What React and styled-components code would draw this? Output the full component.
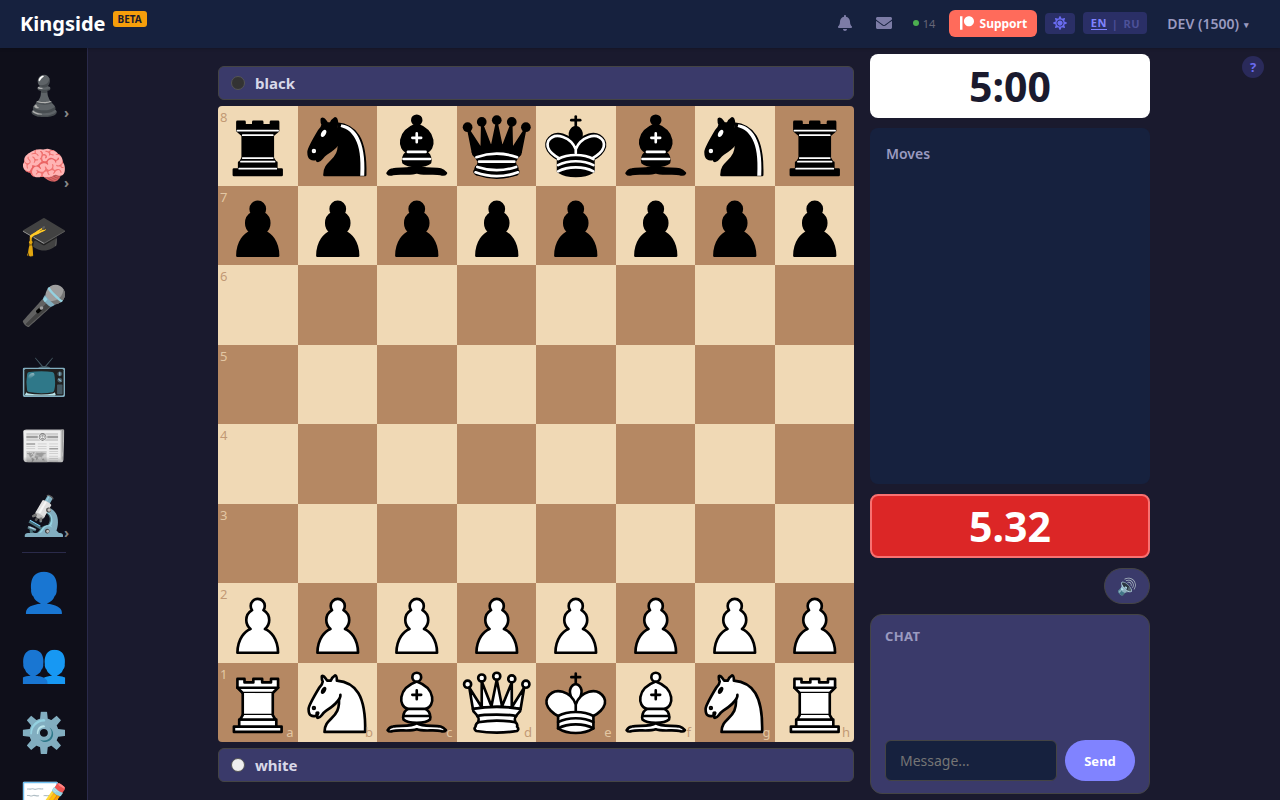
import React from "react";
import styled, { createGlobalStyle } from "styled-components";
import { FaBell, FaEnvelope, FaPatreon, FaSun } from "react-icons/fa";

const Global = createGlobalStyle`
  html, body { margin: 0; padding: 0; height: 100%; background: #1a1a2e; overflow: hidden; }
  body { font-family: "Noto Sans", "Noto Color Emoji", sans-serif; }
  * { box-sizing: border-box; }
`;

const Page = styled.div`
  width: 1280px;
  height: 800px;
  display: flex;
  flex-direction: column;
  position: relative;
  overflow: hidden;
`;

const Header = styled.header`
  height: 48px;
  flex: none;
  display: flex;
  align-items: center;
  padding: 0 31px 0 20px;
  background: #16213e;
  box-shadow: 0 1px 3px rgba(0, 0, 0, 0.2);
  z-index: 1;
`;

const Logo = styled.div`
  font-size: 20px;
  font-weight: 700;
  color: #fff;
  line-height: 1;
`;

const Beta = styled.span`
  margin: 0 0 10px 7px;
  padding: 0 5px;
  height: 16px;
  display: flex;
  align-items: center;
  background: #f59e0b;
  color: #1a1a2e;
  font-size: 10px;
  font-weight: 700;
  border-radius: 3px;
`;

const Tools = styled.div`
  margin: 0 0 2px auto;
  display: flex;
  align-items: center;
`;

const IconButton = styled.span`
  display: flex;
  color: #7c7ca6;
  font-size: 16px;
  margin-right: ${(p) => p.$gap}px;
`;

const Online = styled.span`
  display: flex;
  align-items: center;
  gap: 4px;
  margin-right: 14px;
  font-size: 11px;
  color: #667;
`;

const OnlineDot = styled.i`
  width: 6px;
  height: 6px;
  border-radius: 50%;
  background: #4caf50;
`;

const Support = styled.a`
  width: 88px;
  height: 27px;
  margin-right: 8px;
  display: flex;
  align-items: center;
  justify-content: center;
  gap: 6px;
  background: #ff6b5b;
  color: #fff;
  font-size: 12px;
  font-weight: 700;
  border-radius: 6px;
`;

const Theme = styled.span`
  width: 30px;
  height: 21px;
  margin-right: 8px;
  display: flex;
  align-items: center;
  justify-content: center;
  background: #2a2f66;
  color: #6a6cf0;
  font-size: 14px;
  border-radius: 4px;
`;

const Lang = styled.div`
  width: 64px;
  height: 22px;
  margin-right: 20px;
  display: flex;
  align-items: center;
  justify-content: center;
  gap: 5px;
  background: #2a2f66;
  border-radius: 4px;
  font-size: 11px;
  font-weight: 700;
  letter-spacing: 0.5px;
  color: #4d5199;
`;

const LangActive = styled.span`
  color: #8083ff;
  border-bottom: 1px solid #8083ff;
  line-height: 13px;
`;

const User = styled.div`
  font-size: 14px;
  font-weight: 600;
  color: #9a9ac0;
  display: flex;
  align-items: center;
  gap: 5px;
`;

const Caret = styled.span`
  font-size: 9px;
  padding-top: 2px;
`;

const Body = styled.div`
  flex: 1;
  min-height: 0;
  display: flex;
`;

const Sidebar = styled.nav`
  width: 88px;
  flex: none;
  padding-top: 13px;
  background: #0f0f1a;
  border-right: 1px solid #2a2a4a;
  display: flex;
  flex-direction: column;
  align-items: center;
  overflow: hidden;
`;

const NavItem = styled.div`
  height: 70px;
  width: 100%;
  flex: none;
  position: relative;
  display: flex;
  align-items: center;
  justify-content: center;
  padding: 0 0 4px 2px;
  font-size: 38.4px;
  line-height: 1;
`;

const Chevron = styled.span`
  position: absolute;
  left: 64px;
  top: 45px;
  font-size: 14px;
  font-weight: 700;
  color: #888;
`;

const NavDivider = styled.div`
  width: 44px;
  height: 1px;
  flex: none;
  margin: 1px 0 5px;
  background: #2a2a4a;
`;

const Main = styled.main`
  flex: 1;
  display: flex;
  justify-content: center;
  align-items: center;
  gap: 16px;
`;

const BoardColumn = styled.section`
  width: 636px;
  display: flex;
  flex-direction: column;
  gap: 6px;
`;

const PlayerBar = styled.div`
  height: 34px;
  padding: 0 12px;
  display: flex;
  align-items: center;
  gap: 10px;
  background: #3a3a6a;
  border: 1px solid #444;
  border-radius: 6px;
  font-size: 15px;
  font-weight: 700;
  color: #d8d8e8;
`;

const PlayerDot = styled.i`
  width: 14px;
  height: 14px;
  border-radius: 50%;
  background: ${(p) => (p.$white ? "#eeeeee" : "#333333")};
  border: 1px solid #555;
`;

const Board = styled.div`
  width: 636px;
  height: 636px;
  display: grid;
  grid-template-columns: repeat(8, 1fr);
  grid-template-rows: repeat(8, 1fr);
  border-radius: 4px;
  overflow: hidden;
`;

const Square = styled.div`
  position: relative;
  background: ${(p) => (p.$dark ? "#b58863" : "#f0d9b5")};
  color: ${(p) => (p.$dark ? "rgba(240, 217, 181, 0.8)" : "rgba(181, 136, 99, 0.8)")};
  font-size: 13px;
  line-height: 1;
`;

const Rank = styled.span`
  position: absolute;
  left: 2px;
  top: 5px;
`;

const File = styled.span`
  position: absolute;
  right: 4px;
  bottom: 3px;
`;

const PieceSvg = styled.svg`
  display: block;
  width: 100%;
  height: 100%;
`;

const SideColumn = styled.aside`
  width: 280px;
  display: flex;
  flex-direction: column;
`;

const Clock = styled.div`
  height: 64px;
  margin-bottom: 10px;
  padding-bottom: 1px;
  display: flex;
  align-items: center;
  justify-content: center;
  background: #fff;
  color: #1a1a2e;
  border-radius: 8px;
  font-size: 41px;
  font-weight: 700;
`;

const Moves = styled.div`
  height: 356px;
  margin-bottom: 10px;
  padding: 16px;
  background: #16213e;
  border-radius: 8px;
  font-size: 14px;
  font-weight: 600;
  line-height: 19px;
  color: #9a9ac0;
`;

const Score = styled.div`
  height: 64px;
  margin-bottom: 10px;
  padding-bottom: 1px;
  display: flex;
  align-items: center;
  justify-content: center;
  background: #dc2626;
  border: 2px solid #f87171;
  border-radius: 8px;
  color: #fff;
  font-size: 41px;
  font-weight: 700;
`;

const SoundRow = styled.div`
  height: 36px;
  margin-bottom: 10px;
  display: flex;
  justify-content: flex-end;
`;

const SoundButton = styled.button`
  width: 46px;
  height: 36px;
  padding: 0;
  background: #3a3a6a;
  border: 1px solid #444;
  border-radius: 18px;
  font-family: inherit;
  font-size: 16px;
  color: #fff;
`;

const Chat = styled.div`
  height: 180px;
  padding: 13px 14px 12px;
  display: flex;
  flex-direction: column;
  justify-content: space-between;
  background: #3a3a6a;
  border: 1px solid #444;
  border-radius: 12px;
`;

const ChatTitle = styled.div`
  font-size: 13px;
  font-weight: 700;
  letter-spacing: 0.4px;
  line-height: 16px;
  color: #9a9ac0;
`;

const ChatForm = styled.div`
  display: flex;
  gap: 8px;
`;

const ChatInput = styled.input`
  width: 172px;
  height: 41px;
  padding: 0 14px;
  background: #16213e;
  border: 1px solid #444;
  border-radius: 6px;
  font-family: inherit;
  font-size: 14px;
  color: #fff;
  outline: none;
  &::placeholder { color: #757575; }
`;

const SendButton = styled.button`
  width: 70px;
  height: 41px;
  padding: 0;
  background: #8083ff;
  border: none;
  border-radius: 21px;
  font-family: inherit;
  font-size: 13px;
  font-weight: 700;
  color: #fff;
`;

const Help = styled.span`
  position: absolute;
  left: 1242px;
  top: 56px;
  width: 22px;
  height: 22px;
  display: flex;
  align-items: center;
  justify-content: center;
  background: #2a2a5a;
  color: #6a6cf0;
  border-radius: 50%;
  font-size: 13px;
  font-weight: 700;
`;

const G = styled.g`
  fill-rule: evenodd;
  stroke: #000;
  stroke-width: 1.5;
  stroke-linecap: round;
  stroke-linejoin: round;
`;

const pawn = "M22.5 9c-2.21 0-4 1.79-4 4 0 .89.29 1.71.78 2.38C17.33 16.5 16 18.59 16 21c0 2.03.94 3.84 2.41 5.03-3 1.06-7.41 5.55-7.41 13.47h23c0-7.92-4.41-12.41-7.41-13.47 1.47-1.19 2.41-3 2.41-5.03 0-2.41-1.33-4.5-3.28-5.62.49-.67.78-1.49.78-2.38 0-2.21-1.79-4-4-4z";
const knightBack = "M22 10c10.5 1 16.5 8 16 29H15c0-9 10-6.5 8-21";
const knightHead = "M24 18c.38 2.91-5.55 7.37-8 9-3 2-2.82 4.34-5 4-1.042-.94 1.41-3.04 0-3-1 0 .19 1.23-1 2-1 0-4.003 1-4-4 0-2 6-12 6-12s1.89-1.9 2-3.5c-.73-.994-.5-2-.5-3 1-1 3 2.5 3 2.5h2s.78-1.992 2.5-3c1 0 1 3 1 3";
const knightEyes = "M9.5 25.5a.5.5 0 1 1-1 0 .5.5 0 1 1 1 0zm5.433-9.75a.5 1.5 30 1 1-.866-.5.5 1.5 30 1 1 .866.5z";
const bishopBase = "M9 36c3.39-.97 10.11.43 13.5-2 3.39 2.43 10.11 1.03 13.5 2 0 0 1.65.54 3 2-.68.97-1.65.99-3 .5-3.39-.97-10.11.46-13.5-1-3.39 1.46-10.11.03-13.5 1-1.354.49-2.323.47-3-.5 1.354-1.94 3-2 3-2z";
const bishopBody = "M15 32c2.5 2.5 12.5 2.5 15 0 .5-1.5 0-2 0-2 0-2.5-2.5-4-2.5-4 5.5-1.5 6-11.5-5-15.5-11 4-10.5 14-5 15.5 0 0-2.5 1.5-2.5 4 0 0-.5.5 0 2z";
const bishopTop = "M25 8a2.5 2.5 0 1 1-5 0 2.5 2.5 0 1 1 5 0z";
const bishopMarks = "M17.5 26h10M15 30h15m-7.5-14.5v5M20 18h5";
const queenSkirt = "M9 26c0 2 1.5 2 2.5 4 1 1.5 1 1 .5 3.5-1.5 1-1.5 2.5-1.5 2.5-1.5 1.5.5 2.5.5 2.5 6.5 1 16.5 1 23 0 0 0 1.5-1 0-2.5 0 0 .5-1.5-1-2.5-.5-2.5-.5-2 .5-3.5 1-2 2.5-2 2.5-4-8.5-1.5-18.5-1.5-27 0z";
const kingCenter = "M22.5 25s4.5-7.5 3-10.5c0 0-1-2.5-3-2.5s-3 2.5-3 2.5c-1.5 3 3 10.5 3 10.5";
const kingBody = "M12.5 37c5.5 3.5 14.5 3.5 20 0v-7s9-4.5 6-10.5c-4-6.5-13.5-3.5-16 4V27v-3.5c-2.5-7.5-12-10.5-16-4-3 6 6 10.5 6 10.5v7";
const kingBands = "M12.5 30c5.5-3 14.5-3 20 0m-20 3.5c5.5-3 14.5-3 20 0m-20 3.5c5.5-3 14.5-3 20 0";

const shapes = {
  P: <path d={pawn} fill="#fff" />,
  p: <path d={pawn} fill="#000" />,
  R: (
    <g fill="#fff">
      <path d="M9 39h27v-3H9v3zM12 36v-4h21v4H12zM11 14V9h4v2h5V9h5v2h5V9h4v5" strokeLinecap="butt" />
      <path d="M34 14l-3 3H14l-3-3" />
      <path d="M31 17v12.5H14V17" strokeLinecap="butt" strokeLinejoin="miter" />
      <path d="M31 29.5l1.5 2.5h-20l1.5-2.5" />
      <path d="M11 14h23" fill="none" strokeLinejoin="miter" />
    </g>
  ),
  r: (
    <g fill="#000">
      <path d="M9 39h27v-3H9v3zM12.5 32l1.5-2.5h17l1.5 2.5h-20zM12 36v-4h21v4H12z" strokeLinecap="butt" />
      <path d="M14 29.5v-13h17v13H14z" strokeLinecap="butt" strokeLinejoin="miter" />
      <path d="M14 16.5L11 14h23l-3 2.5H14zM11 14V9h4v2h5V9h5v2h5V9h4v5H11z" strokeLinecap="butt" />
      <path d="M12 35.5h21M13 31.5h19M14 29.5h17M14 16.5h17M11 14h23" fill="none" stroke="#fff" strokeWidth="1" strokeLinejoin="miter" />
    </g>
  ),
  N: (
    <g fill="none">
      <path d={knightBack} fill="#fff" />
      <path d={knightHead} fill="#fff" />
      <path d={knightEyes} fill="#000" />
    </g>
  ),
  n: (
    <g fill="none">
      <path d={knightBack} fill="#000" />
      <path d={knightHead} fill="#000" />
      <path d={knightEyes} fill="#fff" stroke="#fff" />
      <path d="M24.55 10.4l-.45 1.45.5.15c3.15 1 5.65 2.49 7.9 6.75S35.75 29.06 35.25 39l-.05.5h2.25l.05-.5c.5-10.06-.88-16.85-3.25-21.34-2.37-4.49-5.79-6.64-9.19-7.16l-.51-.1z" fill="#fff" stroke="none" />
    </g>
  ),
  B: (
    <g fill="none">
      <g fill="#fff" strokeLinecap="butt">
        <path d={bishopBase} />
        <path d={bishopBody} />
        <path d={bishopTop} />
      </g>
      <path d={bishopMarks} strokeLinejoin="miter" />
    </g>
  ),
  b: (
    <g fill="none">
      <g fill="#000" strokeLinecap="butt">
        <path d={bishopBase} />
        <path d={bishopBody} />
        <path d={bishopTop} />
      </g>
      <path d={bishopMarks} stroke="#fff" strokeLinejoin="miter" />
    </g>
  ),
  Q: (
    <g fill="#fff">
      <path d="M8 12a2 2 0 1 1-4 0 2 2 0 1 1 4 0zM24.5 7.5a2 2 0 1 1-4 0 2 2 0 1 1 4 0zM41 12a2 2 0 1 1-4 0 2 2 0 1 1 4 0zM16 8.5a2 2 0 1 1-4 0 2 2 0 1 1 4 0zM33 9a2 2 0 1 1-4 0 2 2 0 1 1 4 0z" />
      <path d="M9 26c8.5-1.5 21-1.5 27 0l2-12-7 11V11l-5.5 13.5-3-15-3 15-5.5-14V25L7 14l2 12z" strokeLinecap="butt" />
      <path d={queenSkirt} strokeLinecap="butt" />
      <path d="M11.5 30c3.5-1 18.5-1 22 0M12 33.5c6-1 15-1 21 0" fill="none" />
    </g>
  ),
  q: (
    <g fill="#000">
      <g stroke="none">
        <circle cx="6" cy="12" r="2.75" />
        <circle cx="14" cy="9" r="2.75" />
        <circle cx="22.5" cy="8" r="2.75" />
        <circle cx="31" cy="9" r="2.75" />
        <circle cx="39" cy="12" r="2.75" />
      </g>
      <path d="M9 26c8.5-1.5 21-1.5 27 0l2.5-12.5L31 25l-.3-14.1-5.2 13.6-3-14.5-3 14.5-5.2-13.6L14 25 6.5 13.5 9 26z" strokeLinecap="butt" />
      <path d={queenSkirt} strokeLinecap="butt" />
      <path d="M11 38.5a35 35 1 0 0 23 0" fill="none" strokeLinecap="butt" />
      <path d="M11 29a35 35 1 0 1 23 0M12.5 31.5h20M11.5 34.5a35 35 1 0 0 22 0M10.5 37.5a35 35 1 0 0 24 0" fill="none" stroke="#fff" />
    </g>
  ),
  K: (
    <g fill="none">
      <path d="M22.5 11.63V6M20 8h5" strokeLinejoin="miter" />
      <path d={kingCenter} fill="#fff" strokeLinecap="butt" strokeLinejoin="miter" />
      <path d={kingBody} fill="#fff" />
      <path d={kingBands} />
    </g>
  ),
  k: (
    <g fill="none">
      <path d="M22.5 11.63V6" strokeLinejoin="miter" />
      <path d={kingCenter} fill="#000" strokeLinecap="butt" strokeLinejoin="miter" />
      <path d={kingBody} fill="#000" />
      <path d="M20 8h5" strokeLinejoin="miter" />
      <path d="M32 29.5s8.5-4 6.03-9.65C34.15 14 25 18 22.5 24.5l.01 2.1-.01-2.1C20 18 10.85 14 6.97 19.85 4.5 25.5 13 29.5 13 29.5" stroke="#fff" />
      <path d={kingBands} stroke="#fff" />
    </g>
  ),
};

const Piece = ({ code }) => (
  <PieceSvg viewBox="0 0 45 45">
    <G>{shapes[code]}</G>
  </PieceSvg>
);

const position = ["rnbqkbnr", "pppppppp", "        ", "        ", "        ", "        ", "PPPPPPPP", "RNBQKBNR"];
const files = "abcdefgh";

const nav = [
  { icon: "♟️", more: true },
  { icon: "🧠", more: true },
  { icon: "🎓" },
  { icon: "🎤" },
  { icon: "📺" },
  { icon: "📰" },
  { icon: "🔬", more: true },
  { divider: true },
  { icon: "👤" },
  { icon: "👥" },
  { icon: "⚙️" },
  { icon: "📝" },
];

export default function App() {
  return (
    <Page>
      <Global />
      <Header>
        <Logo>Kingside</Logo>
        <Beta>BETA</Beta>
        <Tools>
          <IconButton $gap={23}><FaBell /></IconButton>
          <IconButton $gap={21}><FaEnvelope /></IconButton>
          <Online><OnlineDot />14</Online>
          <Support><FaPatreon size={14} />Support</Support>
          <Theme><FaSun /></Theme>
          <Lang>
            <LangActive>EN</LangActive>
            <span>|</span>
            <span>RU</span>
          </Lang>
          <User>DEV (1500)<Caret>▾</Caret></User>
        </Tools>
      </Header>
      <Body>
        <Sidebar>
          {nav.map((item, i) =>
            item.divider ? (
              <NavDivider key={i} />
            ) : (
              <NavItem key={i}>
                {item.icon}
                {item.more && <Chevron>›</Chevron>}
              </NavItem>
            )
          )}
        </Sidebar>
        <Main>
          <BoardColumn>
            <PlayerBar><PlayerDot />black</PlayerBar>
            <Board>
              {position.map((row, r) =>
                row.split("").map((c, f) => (
                  <Square key={`${r}${f}`} $dark={(r + f) % 2 === 1}>
                    {f === 0 && <Rank>{8 - r}</Rank>}
                    {r === 7 && <File>{files[f]}</File>}
                    {c !== " " && <Piece code={c} />}
                  </Square>
                ))
              )}
            </Board>
            <PlayerBar><PlayerDot $white />white</PlayerBar>
          </BoardColumn>
          <SideColumn>
            <Clock>5:00</Clock>
            <Moves>Moves</Moves>
            <Score>5.32</Score>
            <SoundRow><SoundButton>🔊</SoundButton></SoundRow>
            <Chat>
              <ChatTitle>CHAT</ChatTitle>
              <ChatForm>
                <ChatInput placeholder="Message..." />
                <SendButton>Send</SendButton>
              </ChatForm>
            </Chat>
          </SideColumn>
        </Main>
      </Body>
      <Help>?</Help>
    </Page>
  );
}
